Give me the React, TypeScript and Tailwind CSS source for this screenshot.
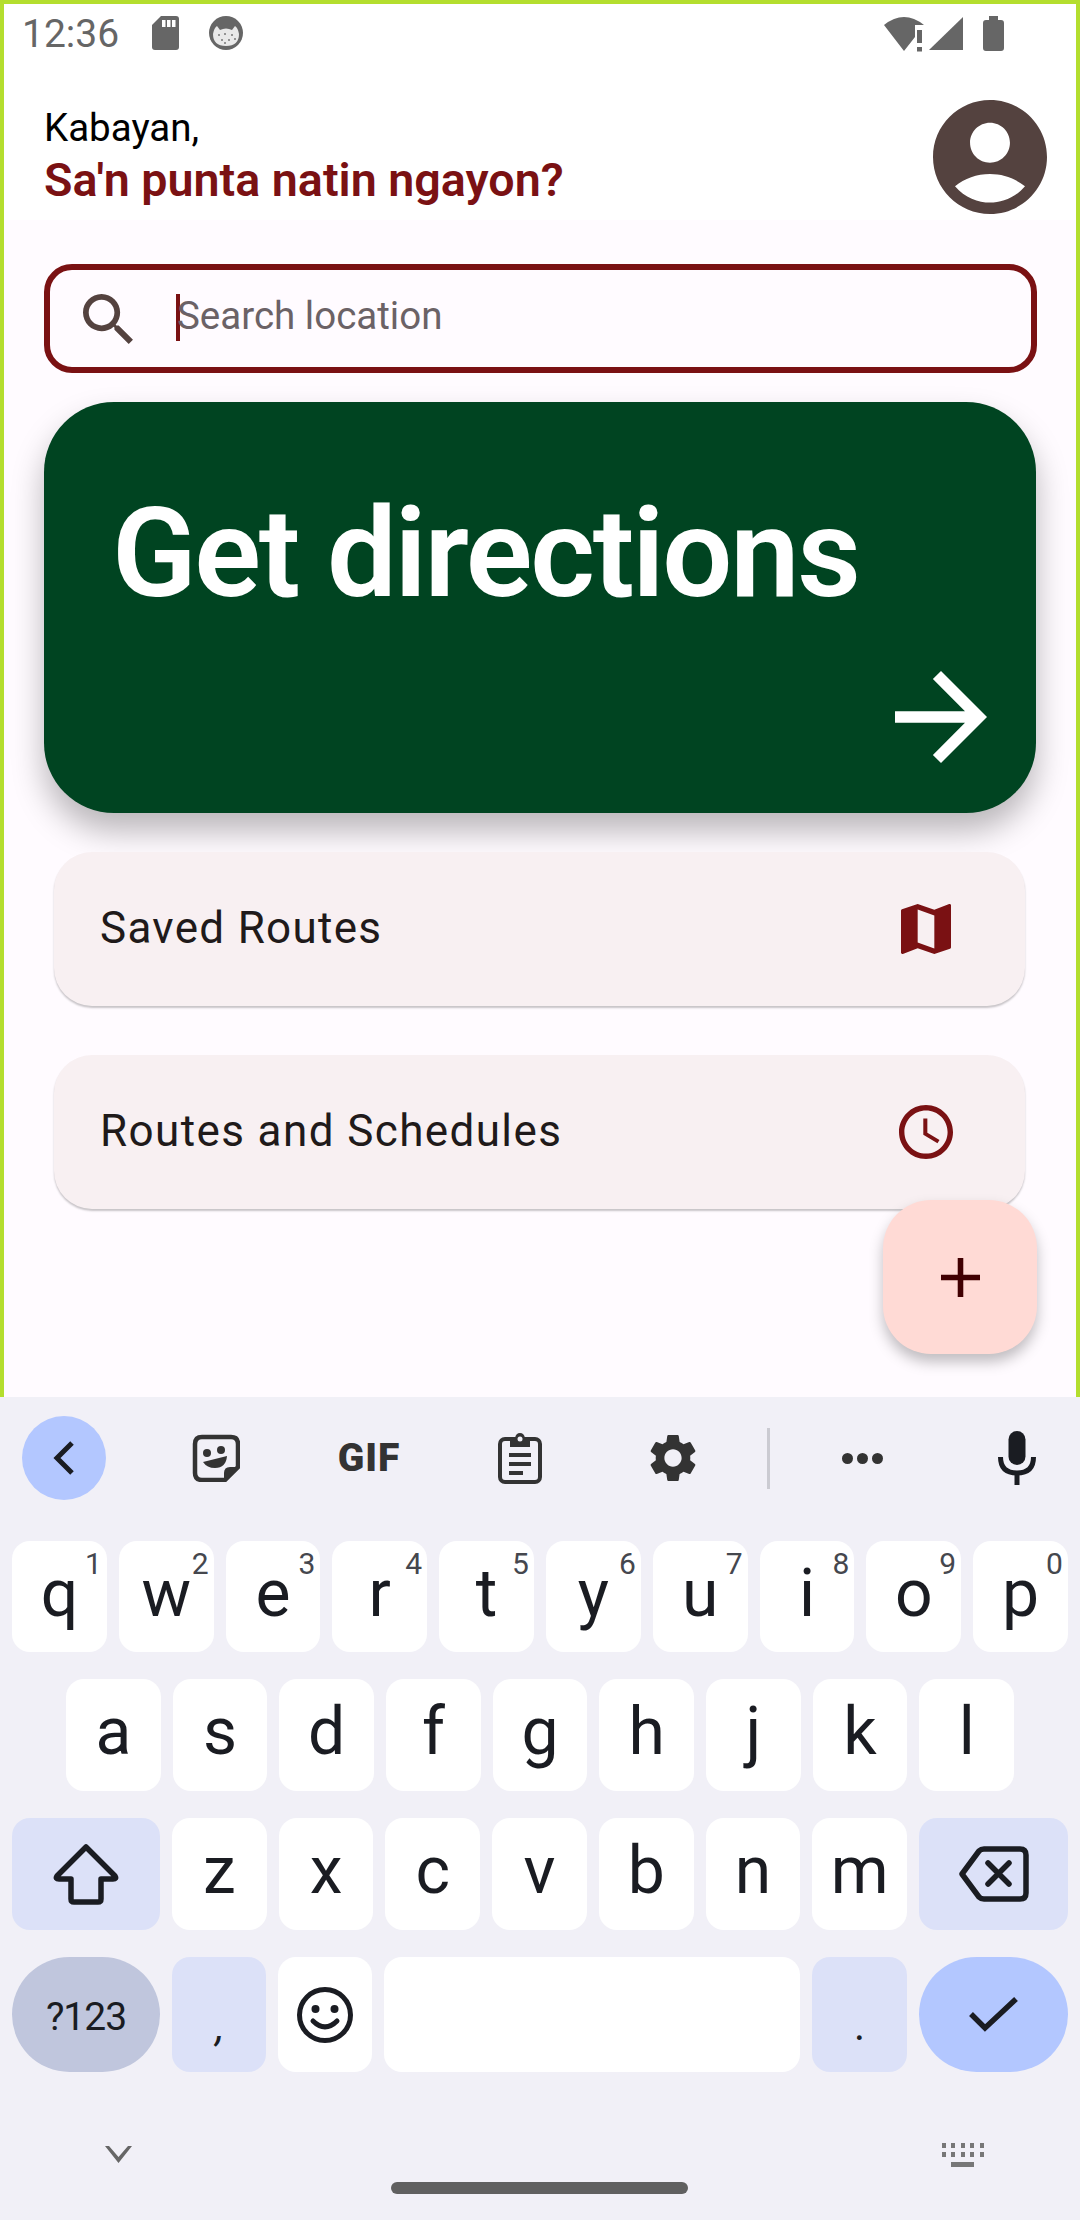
import React from "react";

const keyFont = { fontFamily: "Roboto, sans-serif" };

function LetterKey({ k, sup }: { k: string; sup?: string }) {
  return (
    <div className="relative flex-1 h-full bg-white rounded-[18px] flex items-center justify-center text-[66px] leading-none text-[#1a1c22] pb-[6px]">
      {k}
      {sup && <span className="absolute top-[8px] right-[5px] text-[30px] leading-none text-[#45474e]">{sup}</span>}
    </div>
  );
}

function ShiftIcon() {
  return (
    <svg width="66" height="62" viewBox="0 0 66 62" fill="none" stroke="#1a1c22" strokeWidth="5.5" strokeLinejoin="round">
      <path d="M33 4 L4 33 Q2 36 6 36 L18 36 L18 56 Q18 59 21 59 L45 59 Q48 59 48 56 L48 36 L60 36 Q64 36 62 33 Z" />
    </svg>
  );
}

function DeleteIcon() {
  return (
    <svg width="70" height="56" viewBox="0 0 70 56" fill="none" stroke="#1a1c22" strokeWidth="5.5" strokeLinejoin="round" strokeLinecap="round">
      <path d="M3 28 L20 5 Q22 3 25 3 L61 3 Q67 3 67 9 L67 47 Q67 53 61 53 L25 53 Q22 53 20 51 Z" />
      <path d="M29 17 L50 38 M50 17 L29 38" />
    </svg>
  );
}

function EmojiIcon() {
  return (
    <svg width="58" height="58" viewBox="0 0 58 58" fill="none" stroke="#1a1c22" strokeWidth="5">
      <circle cx="29" cy="29" r="25.5" />
      <circle cx="19.5" cy="23" r="4" fill="#1a1c22" stroke="none" />
      <circle cx="38.5" cy="23" r="4" fill="#1a1c22" stroke="none" />
      <path d="M17 35 Q29 47 41 35" strokeLinecap="round" />
    </svg>
  );
}

function CheckIcon() {
  return (
    <svg width="50" height="36" viewBox="0 0 50 36" fill="none" stroke="#1a1c22" strokeWidth="5.5">
      <path d="M2 17 L16 31 L47 2" />
    </svg>
  );
}

export default function App() {
  return (
    <div className="w-[1080px] h-[2220px] flex flex-col overflow-hidden bg-[#f1f0f7]" style={keyFont}>
      {/* App frame */}
      <div className="relative h-[1397px] shrink-0 border-[4px] border-b-0 border-[#b4de2e] bg-[#fffbff] flex flex-col">
        {/* Header */}
        <div className="h-[216px] bg-white shrink-0 flex flex-col">
          <div className="h-[52px] flex items-start pt-[12px] pl-[18px] pr-[72px] text-[39px] leading-[37px] text-[#666666]">
            <span>12:36</span>
            <svg className="ml-[33px]" width="27" height="34" viewBox="0 0 27 34" fill="#666666">
              <path d="M9 0 H24 Q27 0 27 3 V31 Q27 34 24 34 H3 Q0 34 0 31 V9 Z" />
              <rect x="10" y="4" width="3.5" height="7" fill="#fff" />
              <rect x="15" y="4" width="3.5" height="7" fill="#fff" />
              <rect x="20" y="4" width="3.5" height="7" fill="#fff" />
            </svg>
            <svg className="ml-[30px]" width="34" height="34" viewBox="0 0 34 34">
              <circle cx="17" cy="17" r="17" fill="#666666" />
              <path d="M4 18 Q5 12 8 10 L11 14 Q17 11 23 14 L26 10 Q29 12 30 18 Q30 30 17 30 Q4 30 4 18 Z" fill="#e9e9e9" />
              <g fill="#777777">
                <circle cx="10" cy="19" r="1" /><circle cx="16" cy="18" r="1" /><circle cx="23" cy="19" r="1" />
                <circle cx="13" cy="24" r="1" /><circle cx="20" cy="24" r="1" /><circle cx="26" cy="23" r="1" /><circle cx="16" cy="27" r="1" />
              </g>
            </svg>
            <div className="ml-auto flex items-start">
              <svg width="42" height="36" viewBox="0 0 42 36" fill="#666666">
                <path d="M0 9 Q20 -7 40 9 L31 9 L31 21 L20 35 Z" />
                <rect x="33" y="14" width="5" height="13" />
                <rect x="33" y="31" width="5" height="4.5" />
              </svg>
              <svg className="ml-[3px] mt-[1px]" width="34" height="34" viewBox="0 0 34 34" fill="#666666">
                <path d="M0 33 L34 0 V33 Z" />
              </svg>
              <svg className="ml-[20px]" width="21" height="35" viewBox="0 0 21 35" fill="#666666">
                <path d="M6 0 H15 V4 H18 Q21 4 21 7 V32 Q21 35 18 35 H3 Q0 35 0 32 V7 Q0 4 3 4 H6 Z" />
              </svg>
            </div>
          </div>
          <div className="flex items-start pl-[41px] pr-[29px] pt-[44px]">
            <div className="flex flex-col pt-[6px]">
              <span className="text-[38.5px] leading-[44px] text-black -ml-[1px]">Kabayan,</span>
              <span className="text-[46.6px] leading-[52px] font-semibold text-[#7a1113] mt-[4px] -ml-[1px]">Sa'n punta natin ngayon?</span>
            </div>
            <svg className="ml-auto" width="114" height="114" viewBox="2 2 20 20" fill="#54423f">
              <path d="M12 2C6.48 2 2 6.48 2 12s4.48 10 10 10 10-4.48 10-10S17.52 2 12 2zm0 4c1.93 0 3.5 1.57 3.5 3.5S13.93 13 12 13s-3.5-1.57-3.5-3.5S10.07 6 12 6zm0 14c-2.03 0-4.43-.82-6.14-2.88C7.55 15.8 9.68 15 12 15s4.45.8 6.14 2.12C16.43 19.18 14.03 20 12 20z" />
            </svg>
          </div>
        </div>

        {/* Search */}
        <div className="mt-[44px] ml-[40px] w-[993px] h-[109px] border-[6px] border-[#7a1113] rounded-[28px] flex items-center pl-[33px]">
          <svg width="50" height="50" viewBox="3 3 17.5 17.5" fill="#54423f">
            <path d="M15.5 14h-.79l-.28-.27C15.41 12.59 16 11.11 16 9.5 16 5.91 13.09 3 9.5 3S3 5.91 3 9.5 5.91 16 9.5 16c1.61 0 3.09-.59 4.23-1.57l.27.28v.79l5 4.99L20.49 19l-4.99-5zm-6 0C7.01 14 5 11.99 5 9.5S7.01 5 9.5 5 14 7.01 14 9.5 11.99 14 9.5 14z" />
          </svg>
          <div className="ml-[43px] w-[4px] h-[47px] bg-[#7a1113] -mt-[2px]" />
          <span className="text-[38.5px] leading-none text-[#6b6266] -ml-[3px] -mt-[5px]">Search location</span>
        </div>

        {/* Get directions */}
        <div className="mt-[29px] ml-[40px] w-[992px] h-[411px] bg-[#004421] rounded-[70px] shadow-[0_18px_32px_rgba(0,0,0,0.28)] flex flex-col pl-[68px] pr-[49px]">
          <span className="text-[124px] leading-[130px] font-semibold text-white mt-[87px] tracking-[-2.2px]">Get directions</span>
          <svg className="ml-auto mt-[52px]" width="92" height="92" viewBox="4 4 16 16" fill="#ffffff">
            <path d="M12 4l-1.41 1.41L16.17 11H4v2h12.17l-5.58 5.59L12 20l8-8z" />
          </svg>
        </div>

        {/* List cards */}
        <div className="mt-[39px] ml-[50px] w-[971px] h-[154px] bg-[#f8f0f2] rounded-[38px] shadow-[0_2px_2px_rgba(0,0,0,0.22)] flex items-center pl-[46px] pr-[74px]">
          <span className="text-[44px] leading-none text-[#201a1a] tracking-[1.3px] -mt-[3px]">Saved Routes</span>
          <svg className="ml-auto" width="50" height="50" viewBox="3 3 18 18" fill="#7a1113">
            <path d="M20.5 3l-.16.03L15 5.1 9 3 3.36 4.9c-.21.07-.36.25-.36.48V20.5c0 .28.22.5.5.5l.16-.03L9 18.9l6 2.1 5.64-1.9c.21-.07.36-.25.36-.48V3.5c0-.28-.22-.5-.5-.5zM15 19l-6-2.11V5l6 2.11V19z" />
          </svg>
        </div>
        <div className="mt-[49px] ml-[50px] w-[971px] h-[154px] bg-[#f8f0f2] rounded-[38px] shadow-[0_2px_2px_rgba(0,0,0,0.22)] flex items-center pl-[46px] pr-[72px]">
          <span className="text-[44px] leading-none text-[#201a1a] tracking-[1.4px] -mt-[3px]">Routes and Schedules</span>
          <svg className="ml-auto" width="54" height="54" viewBox="2 2 20 20" fill="#7a1113">
            <path d="M11.99 2C6.47 2 2 6.48 2 12s4.47 10 9.99 10C17.52 22 22 17.52 22 12S17.52 2 11.99 2zM12 20c-4.42 0-8-3.58-8-8s3.58-8 8-8 8 3.58 8 8-3.58 8-8 8zm.5-13H11v6l5.25 3.15.75-1.23-4.5-2.67z" />
          </svg>
        </div>

        {/* FAB */}
        <div className="absolute left-[879px] top-[1196px] w-[154px] h-[154px] rounded-[48px] bg-[#ffdad5] shadow-[0_8px_14px_rgba(0,0,0,0.25)] flex items-center justify-center">
          <svg width="39" height="39" viewBox="5 5 14 14" fill="#410002">
            <path d="M19 13h-6v6h-2v-6H5v-2h6V5h2v6h6v2z" />
          </svg>
        </div>
      </div>

      {/* Keyboard toolbar */}
      <div className="h-[144px] shrink-0 flex items-start pt-[19px] pl-[22px]">
        <div className="w-[84px] h-[84px] rounded-full bg-[#b3c7ff] flex items-center justify-center">
          <svg width="22" height="34" viewBox="0 0 22 34" fill="none" stroke="#1a1c22" strokeWidth="5">
            <path d="M19 2 L4 17 L19 32" />
          </svg>
        </div>
        <div className="ml-[56px] w-[108px] h-[84px] flex items-center justify-center">
          <svg width="48" height="48" viewBox="0 0 48 48" fill="none" stroke="#333333" strokeWidth="4.5">
            <path d="M10 3 H39 Q46 3 46 10 V33 L33 46 H10 Q3 46 3 39 V10 Q3 3 10 3 Z" />
            <path d="M46 33 H38 Q32 33 32 39 V46 Z" fill="#333333" stroke="none" />
            <circle cx="15" cy="19" r="4" fill="#333333" stroke="none" />
            <circle cx="29" cy="16" r="4" fill="#333333" stroke="none" />
            <path d="M11 28 L35 22 Q34 34 23 34 Q15 34 11 28 Z" fill="#333333" stroke="none" />
          </svg>
        </div>
        <div className="ml-[45px] w-[108px] h-[84px] flex items-center justify-center text-[39px] leading-none font-black text-[#333333] tracking-[1px]">GIF</div>
        <div className="ml-[43px] w-[108px] h-[84px] flex items-center justify-center">
          <svg width="44" height="52" viewBox="0 0 44 52" fill="none" stroke="#333333" strokeWidth="4">
            <rect x="2" y="7" width="40" height="43" rx="5" />
            <path d="M12 6 H17 Q18 1 22 1 Q26 1 27 6 H32 V15 H12 Z" fill="#333333" stroke="none" />
            <circle cx="22" cy="7" r="2.5" fill="#f1f0f7" stroke="none" />
            <path d="M11 23 H33 M11 32 H33 M11 41 H25" />
          </svg>
        </div>
        <div className="ml-[45px] w-[108px] h-[84px] flex items-center justify-center">
          <svg width="46" height="48" viewBox="2.7 2 18.6 20" fill="#333333">
            <path d="M19.14 12.94c.04-.3.06-.61.06-.94 0-.32-.02-.64-.07-.94l2.03-1.58c.18-.14.23-.41.12-.61l-1.92-3.32c-.12-.22-.37-.29-.59-.22l-2.39.96c-.5-.38-1.03-.7-1.62-.94l-.36-2.54c-.04-.24-.24-.41-.48-.41h-3.84c-.24 0-.43.17-.47.41l-.36 2.54c-.59.24-1.13.57-1.62.94l-2.39-.96c-.22-.08-.47 0-.59.22L2.74 8.87c-.12.21-.08.47.12.61l2.03 1.58c-.05.3-.09.63-.09.94s.02.64.07.94l-2.03 1.58c-.18.14-.23.41-.12.61l1.92 3.32c.12.22.37.29.59.22l2.39-.96c.5.38 1.03.7 1.62.94l.36 2.54c.05.24.24.41.48.41h3.84c.24 0 .44-.17.47-.41l.36-2.54c.59-.24 1.13-.56 1.62-.94l2.39.96c.22.08.47 0 .59-.22l1.92-3.32c.12-.22.07-.47-.12-.61l-2.01-1.58zM12 15.6c-1.98 0-3.6-1.62-3.6-3.6s1.62-3.6 3.6-3.6 3.6 1.62 3.6 3.6-1.62 3.6-3.6 3.6z" />
          </svg>
        </div>
        <div className="ml-[40px] mt-[12px] w-[3px] h-[61px] bg-[#cbcbd2]" />
        <div className="ml-[38px] w-[108px] h-[84px] flex items-center justify-center gap-[4px]">
          <span className="w-[11px] h-[11px] rounded-full bg-[#333333]" />
          <span className="w-[11px] h-[11px] rounded-full bg-[#333333]" />
          <span className="w-[11px] h-[11px] rounded-full bg-[#333333]" />
        </div>
        <div className="ml-[47px] w-[108px] h-[84px] flex items-center justify-center">
          <svg width="38" height="54" viewBox="0 0 38 54" fill="none" stroke="#1a1c22" strokeWidth="5">
            <rect x="10.5" y="0" width="17" height="34" rx="8.5" fill="#1a1c22" stroke="none" />
            <path d="M2.5 26 Q2.5 42 19 42 Q35.5 42 35.5 26" />
            <path d="M19 42 V54" />
          </svg>
        </div>
      </div>

      {/* Keys */}
      <div className="flex flex-col gap-[27px]">
        <div className="h-[111px] flex gap-[12px] px-[12px]">
          {["q", "w", "e", "r", "t", "y", "u", "i", "o", "p"].map((k, i) => (
            <LetterKey key={k} k={k} sup={String((i + 1) % 10)} />
          ))}
        </div>
        <div className="h-[112px] flex gap-[12px] px-[66px]">
          {["a", "s", "d", "f", "g", "h", "j", "k", "l"].map((k) => (
            <LetterKey key={k} k={k} />
          ))}
        </div>
        <div className="h-[112px] flex gap-[12px] px-[12px]">
          <div className="w-[148px] shrink-0 h-full rounded-[18px] bg-[#dce1f8] flex items-center justify-center">
            <ShiftIcon />
          </div>
          {["z", "x", "c", "v", "b", "n", "m"].map((k) => (
            <LetterKey key={k} k={k} />
          ))}
          <div className="w-[149px] shrink-0 h-full rounded-[18px] bg-[#dce1f8] flex items-center justify-center">
            <DeleteIcon />
          </div>
        </div>
        <div className="h-[115px] flex gap-[12px] px-[12px]">
          <div className="w-[148px] shrink-0 h-full rounded-full bg-[#c0c6dd] flex items-center justify-center text-[39px] leading-none text-[#1a1c22] tracking-[-1px] pt-[6px]">?123</div>
          <div className="w-[94px] shrink-0 h-full rounded-[18px] bg-[#dce1f8] flex items-end justify-center text-[42px] leading-none text-[#1a1c22] italic pb-[24px] pl-[2px]">,</div>
          <div className="w-[94px] shrink-0 h-full rounded-[18px] bg-white flex items-center justify-center">
            <EmojiIcon />
          </div>
          <div className="flex-1 h-full rounded-[18px] bg-white" />
          <div className="w-[95px] shrink-0 h-full rounded-[18px] bg-[#dce1f8] flex items-end justify-center text-[42px] leading-none text-[#1a1c22] pb-[25px]">.</div>
          <div className="w-[149px] shrink-0 h-full rounded-full bg-[#b3c7ff] flex items-center justify-center">
            <CheckIcon />
          </div>
        </div>
      </div>

      {/* Bottom controls */}
      <div className="flex items-start justify-between pl-[105px] pr-[96px] pt-[74px]">
        <svg width="27" height="17" viewBox="0 0 27 17" fill="#666666">
          <path d="M0 0 L4 0 L13.5 11 L23 0 L27 0 L13.5 17 Z" />
        </svg>
        <svg className="-mt-[3px]" width="42" height="24" viewBox="0 0 42 24" fill="#777777">
          <path d="M0 0h4v5H0zM9 0h4v5H9zM19 0h4v5h-4zM28 0h4v5h-4zM38 0h4v5h-4zM0 9h4v5H0zM9 9h4v5H9zM19 9h4v5h-4zM28 9h4v5h-4zM38 9h4v5h-4zM9 19h23v5H9z" />
        </svg>
      </div>
      <div className="mt-[15px] ml-[391px] w-[297px] h-[12px] rounded-full bg-[#606060]" />
    </div>
  );
}
